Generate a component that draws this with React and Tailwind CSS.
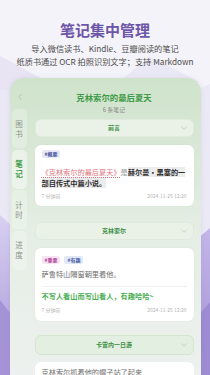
import { ChevronDown, ChevronLeft } from 'lucide-react';

function SectionHeader({ title, tall }) {
  return (
    <div
      className={
        tall
          ? 'flex items-center h-[20px] rounded-[6px] bg-[#e3efe1] border border-[#d3e6cf] px-[4px]'
          : 'flex items-center h-[18px] rounded-[6px] bg-[#eaf2e8] border border-[#dfeadc] px-[4px]'
      }
    >
      <span className="w-[10px]" />
      <span className="flex-1 text-center text-[6px] leading-[8px] font-bold text-[#3f8f47]">{title}</span>
      <ChevronDown size={10} strokeWidth={1.3} className="text-[#a9afa9]" />
    </div>
  );
}

function Tab({ a, b, active }) {
  return (
    <div
      className={
        active
          ? 'flex flex-col items-center justify-center h-[39px] w-[15px] rounded-[5px] bg-white/45 text-[7.5px] leading-[10px] font-bold text-[#3e9a47]'
          : 'flex flex-col items-center justify-center h-[39px] w-[15px] rounded-[5px] bg-white/25 text-[7.5px] leading-[10px] text-[#8c948c]'
      }
    >
      <span className="block">{a}</span>
      <span className="block">{b}</span>
    </div>
  );
}

function Footer() {
  return (
    <div className="flex justify-between text-[5px] leading-[6px] text-[#b3b3b3]">
      <span>7 分钟前</span>
      <span>2024-11-25 12:20</span>
    </div>
  );
}

export default function App() {
  return (
    <div className="relative w-[210px] h-[375px] overflow-hidden bg-[#f4f3f9] font-['Noto_Sans_CJK_SC','Noto_Sans',sans-serif]">
      <svg className="absolute inset-0" width="210" height="375" viewBox="0 0 210 375">
        <defs>
          <linearGradient id="lg" x1="0" y1="0" x2="0" y2="1">
            <stop offset="0" stopColor="#d8d0f0" />
            <stop offset="1" stopColor="#a797d9" />
          </linearGradient>
          <linearGradient id="rg" x1="0" y1="0" x2="0" y2="1">
            <stop offset="0" stopColor="#c3b6e8" />
            <stop offset="1" stopColor="#a392d7" />
          </linearGradient>
        </defs>
        <polygon points="0,56 48,82 12,90 0,90" fill="#e8e4f4" />
        <polygon points="0,90 12,90 12,230 0,222" fill="#ebe8f5" />
        <polygon points="118,82 150,57 200,82" fill="#ebe8f5" />
        <polygon points="0,215 14,228 14,375 0,375" fill="url(#lg)" />
        <polygon points="0,300 14,318 14,375 0,375" fill="#a494d7" />
        <polygon points="196,90 210,84 210,230 196,240" fill="#ece9f6" />
        <polygon points="210,228 196,240 196,375 210,375" fill="url(#rg)" />
        <polygon points="210,302 196,318 196,375 210,375" fill="#9d8cd3" />
      </svg>

      <div className="relative flex flex-col items-center">
        <h1 className="mt-[20px] h-[20px] text-[15px] leading-[20px] font-bold text-[#6d55a8]">笔记集中管理</h1>
        <p className="mt-[1.5px] text-center text-[8.2px] leading-[13px] text-[#4d4d4d]">
          导入微信读书、Kindle、豆瓣阅读的笔记
          <br />
          纸质书通过 OCR 拍照识别文字；支持 Markdown
        </p>

        <div className="mt-[10.5px] w-[191px] h-[316px] flex rounded-t-[14px] bg-linear-to-b from-[#cfe3cb] via-[#e5eee4] to-[#eef1f0] shadow-[0_0_4px_rgba(120,110,160,0.15)]">
          <div className="w-[25px] flex flex-col pl-[2px]">
            <div className="mt-[13px] h-[12px] flex items-center pl-[3px]">
              <ChevronLeft size={10} strokeWidth={1.3} className="text-[#9aa29a]" />
            </div>
            <div className="mt-[6px] flex flex-col gap-[1.5px]">
              <Tab a="图" b="书" />
              <Tab a="笔" b="记" active />
              <Tab a="计" b="时" />
              <Tab a="进" b="度" />
            </div>
          </div>

          <div className="w-[159px] flex flex-col">
            <div className="mt-[13px] h-[12px] text-center text-[8.4px] leading-[12px] font-bold text-[#3e9a47]">
              克林索尔的最后夏天
            </div>
            <div className="mt-[1.5px] text-center text-[6px] leading-[9px] text-[#8a8a8a]">6 条笔记</div>

            <div className="mt-[5.5px]">
              <SectionHeader title="前言" />
            </div>

            <div className="mt-[8px] rounded-[6px] bg-white px-[7px] pt-[5px] pb-[7px] shadow-[0_0_3px_rgba(0,0,0,0.04)]">
              <div className="flex">
                <span className="h-[8px] px-[3px] rounded-[2px] bg-[#e6e8f5] text-[5px] leading-[8px] font-bold text-[#47579b]">#概要</span>
              </div>
              <p className="mt-[8.5px] text-[7.2px] leading-[11px] text-[#9a9a9a]">
                <span className="text-[#e0737d] underline decoration-dotted decoration-[#e0737d] underline-offset-2">《克林索尔的最后夏天》</span>
                是
                <span className="font-bold text-[#2f2f2f] bg-[#ececec]">
                  赫尔曼·黑塞的一
                  <br />
                  部自传式中篇小说。
                </span>
              </p>
              <div className="mt-[4.5px]">
                <Footer />
              </div>
            </div>

            <div className="mt-[16px]">
              <SectionHeader title="克林索尔" />
            </div>

            <div className="mt-[8px] rounded-[6px] bg-white px-[7px] pt-[8px] pb-[8px] shadow-[0_0_3px_rgba(0,0,0,0.04)]">
              <div className="flex gap-[4px]">
                <span className="h-[8px] px-[3px] rounded-[2px] bg-[#f6e4f1] text-[5px] leading-[8px] font-bold text-[#b0489a]">#重要</span>
                <span className="h-[8px] px-[3px] rounded-[2px] bg-[#e3e8f7] text-[5px] leading-[8px] font-bold text-[#4a5fa8]">#有趣</span>
              </div>
              <p className="mt-[4.5px] text-[7.2px] leading-[11px] text-[#6e6e6e]">萨鲁特山隔窗朝里看他。</p>
              <div className="mt-[6.5px] border-t border-[#f0f0f0]" />
              <p className="mt-[4px] text-[7.2px] leading-[11px] font-bold text-[#4cae55]">不写人看山而写山看人，有趣哈哈~</p>
              <div className="mt-[4.5px]">
                <Footer />
              </div>
            </div>

            <div className="mt-[14px]">
              <SectionHeader title="卡雷内一日游" tall />
            </div>

            <div className="mt-[7px] rounded-t-[6px] bg-white px-[7px] pt-[6px] h-[20px]">
              <p className="text-[7.2px] leading-[9px] text-[#6e6e6e]">克林索尔抓着他的帽子站了起来</p>
            </div>
          </div>
        </div>
      </div>
    </div>
  );
}
